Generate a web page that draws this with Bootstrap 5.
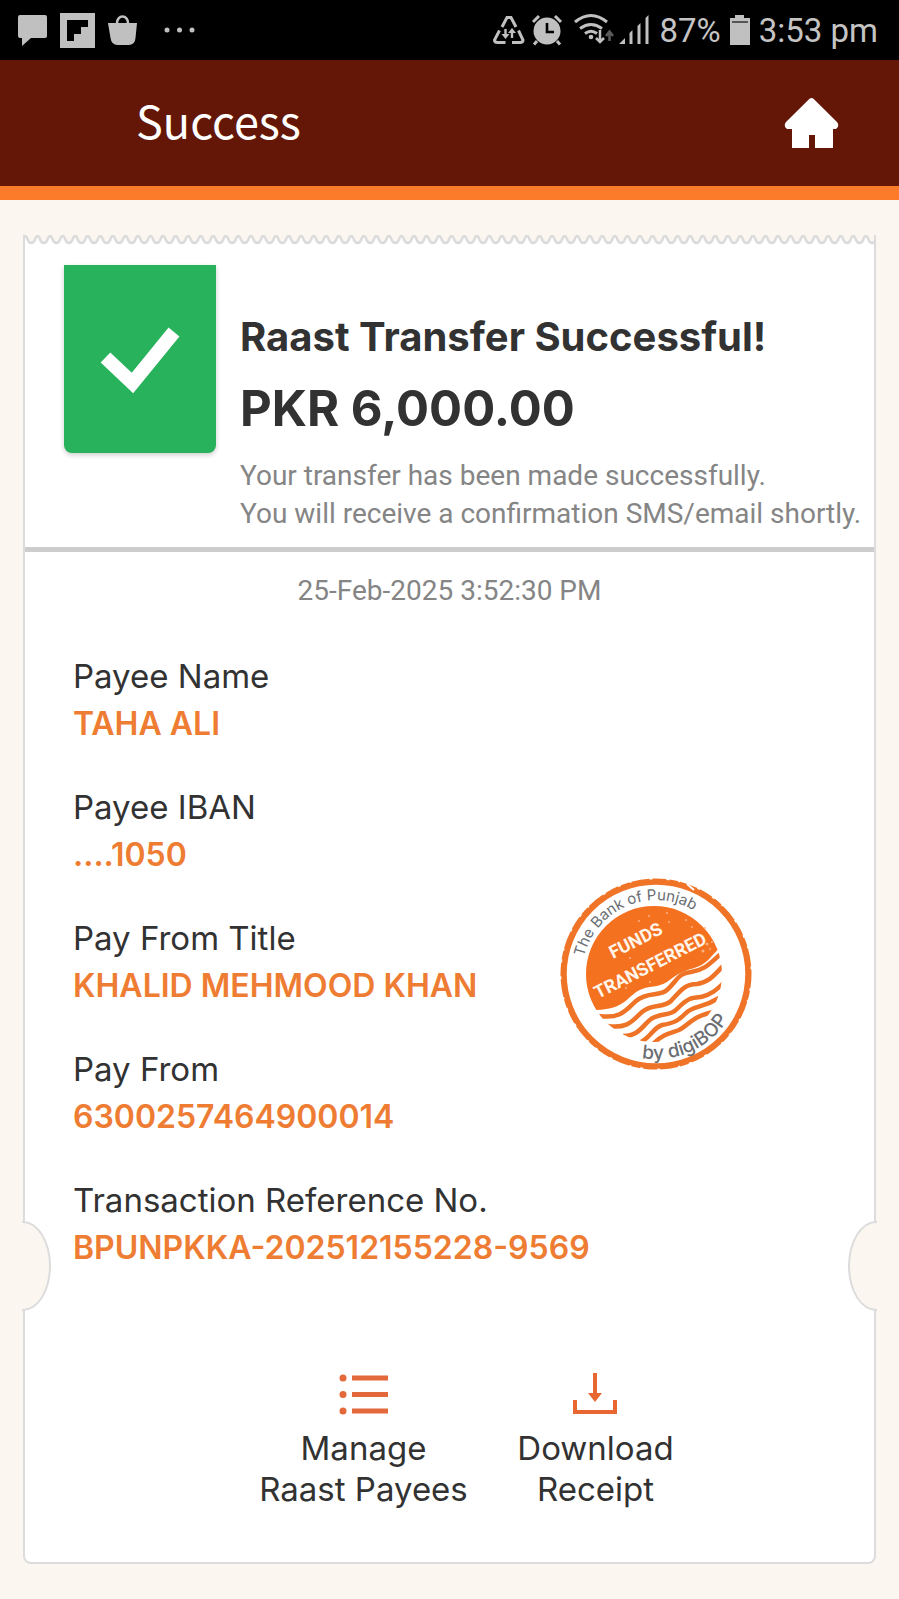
<!DOCTYPE html>
<html lang="en">
<head>
<meta charset="utf-8">
<meta name="viewport" content="width=device-width, initial-scale=1">
<title>Success</title>
<link rel="stylesheet" href="https://cdn.jsdelivr.net/npm/bootstrap@5.3.0/dist/css/bootstrap.min.css">
<style>
  :root { --cream: #fcf6f0; --line: #dcdcdc; --ink: #323232; --accent: #ee7d33; }
  body { background: var(--cream); color: var(--ink); font-family: Inter, sans-serif; }
  svg { display: block; flex: none; }
  .status-bar { height: 60px; background: #000; color: #c4c4c4; font: 33px/60px Roboto, sans-serif; padding: 2px 21px 0 17px; }
  .status-bar svg { margin-top: -2px; }
  .status-icons { gap: 6px; }
  .app-bar { height: 140px; background: #641706; border-bottom: 14px solid #fb7b2a; padding: 0 60px 0 136px; }
  .app-bar h1 { font: 45px/60px "Noto Sans CJK SC", sans-serif; color: #fff; padding-bottom: 6px; }
  .receipt { position: relative; margin: 35px 23px 34px; background: #fff; border: 2px solid var(--line); border-top: 0; border-radius: 0 0 8px 8px; }
  .receipt-edge { width: 100%; height: 10px; }
  .summary { padding: 20px 0 14px 39px; gap: 24px; border-bottom: 5px solid #cdcdcd; }
  .tick-box { width: 152px; height: 188px; background: #28b25c; border-radius: 0 0 8px 8px; box-shadow: 0 2px 5px #0003; }
  .summary-text { padding-top: 46px; }
  .summary-text h2 { font-size: 40px; line-height: 52px; font-weight: 700; }
  .amount { font-size: 49px; line-height: 60px; font-weight: 700; margin: 16px 0 18px; }
  .note, .stamp-time { font: 28px/38px Roboto, sans-serif; color: #858585; }
  .stamp-time { padding-top: 20px; }
  .details { padding: 43px 0 0 48px; }
  .details dl > div { height: 131px; }
  .details dt { font-size: 33px; line-height: 47px; font-weight: 400; }
  .details dd { font-size: 32px; line-height: 47px; font-weight: 600; color: var(--accent); }
  .stamp-art { margin: 0 122px 107px 0; }
  .notch { position: absolute; bottom: 251px; width: 29px; height: 90px; background: var(--cream); border: 2px solid var(--line); }
  .notch-start { left: -3px; border-left: 0; border-radius: 0 28px 28px 0 / 0 45px 45px 0; }
  .notch-end { right: -3px; border-right: 0; border-radius: 28px 0 0 28px / 45px 0 0 45px; }
  .actions { padding: 62px 0 52px 60px; }
  .action { width: 232px; border: 0; background: none; color: var(--ink); font-size: 33px; line-height: 41px; padding: 0; }
</style>
</head>
<body>
<div class="status-bar d-flex align-items-center justify-content-between">
  <svg width="182" height="60" viewBox="17 0 182 60" fill="#c0c0c0" aria-hidden="true">
    <path d="M20 15h25q2 0 2 2v19q0 2-2 2H31l-9 8v-8h-2q-2 0-2-2V17q0-2 2-2z"/>
    <path fill-rule="evenodd" d="M60 13h35v35H60zM67 20v21h7v-7h7v-7h7v-7z"/>
    <path d="M108 23h29l-1.500 15q-.5 7-7 7h-11q-6 0-7-7z"/>
    <path d="M117 24v-1a5.500 6.500 0 0 1 11 0v1" fill="none" stroke="#c0c0c0" stroke-width="2.500"/>
    <circle cx="167" cy="30" r="2.500"/><circle cx="179.500" cy="30" r="2.500"/><circle cx="192" cy="30" r="2.500"/>
  </svg>
  <div class="status-icons d-flex align-items-center">
    <svg width="160" height="60" viewBox="493 0 160 60" fill="none" stroke="#c0c0c0" aria-hidden="true">
      <path d="M502 27l5-9.500h4l5 9.500M499.500 30.500l-5 9.500q0 2.500 3 2.500h8M518.500 30.500l4.500 9.500q0 2.500-3 2.500h-8" stroke-width="3"/>
      <path d="M505.500 29v7M512 38v-7" stroke-width="2.400"/>
      <path d="M501.500 34h8l-4 5zM508 33h8l-4-5z" fill="#c0c0c0" stroke="none"/>
      <circle cx="547" cy="31" r="13.500" fill="#c0c0c0" stroke="none"/>
      <path d="M533 22l6-6M561 22l-6-6" stroke-width="3"/>
      <path d="M537 41l-3 3.500M557 41l3 3.500" stroke-width="3"/>
      <path d="M547 23v9h7" stroke="#000" stroke-width="2.600"/>
      <path d="M575 22q16-13 32 0M580 28.500q11-8 22 0M585 33.500q6-4.500 12 0" stroke-width="3"/>
      <circle cx="591" cy="37" r="2.300" fill="#c0c0c0" stroke="none"/>
      <path d="M600 30v12M596 38l4 4 4-4" stroke-width="2.500"/>
      <path d="M609.500 41V32M606 36l3.500-4.500 3.500 4.500" stroke="#5c5c5c" stroke-width="2.500"/>
      <path d="M619 44l6-6v6zM629.500 44V33l3-3v14zM637.500 44V26l3-3v21zM645.500 44V18l3-3v29z" fill="#c0c0c0" stroke="none"/>
    </svg>
    <span>87%</span>
    <svg width="26" height="60" viewBox="727 0 26 60" aria-hidden="true">
      <path d="M735 18v-3h9v3h6v27h-20V18z" fill="#c0c0c0"/><path d="M732 22h16" stroke="#555" stroke-width="2"/>
    </svg>
    <span>3:53 pm</span>
  </div>
</div>

<header class="app-bar d-flex align-items-center justify-content-between">
  <h1 class="m-0">Success</h1>
  <a href="#" aria-label="Home">
    <svg width="55" height="52" viewBox="784 97 55 52" fill="#fff" aria-hidden="true">
      <path d="M809.500 98.800q2-1.600 4 0L837 122q3 4-1 7h-3v19h-18v-13h-6v13h-17v-19h-5q-4-3-1-7z"/>
    </svg>
  </a>
</header>

<main class="receipt">
  <svg class="receipt-edge" aria-hidden="true">
    <defs>
      <pattern id="scallop" width="12.550" height="10" patternUnits="userSpaceOnUse">
        <path d="M0 0V1C3 1 1.500 8 6.300 8S9.500 1 12.550 1V0z" fill="#fcf6f0"/>
        <path d="M0 1C3 1 1.500 8 6.300 8S9.500 1 12.550 1" fill="none" stroke="#dadada" stroke-width="2.500"/>
      </pattern>
    </defs>
    <rect width="100%" height="10" fill="url(#scallop)"/>
  </svg>

  <section class="summary d-flex">
    <div class="tick-box flex-shrink-0">
      <svg width="152" height="188" viewBox="0 0 152 188" aria-hidden="true">
        <path d="M41.500 92.500L68.500 118 110 67" fill="none" stroke="#fff" stroke-width="14"/>
      </svg>
    </div>
    <div class="summary-text text-nowrap">
      <h2 class="m-0">Raast Transfer Successful!</h2>
      <p class="amount">PKR 6,000.00</p>
      <p class="note m-0">Your transfer has been made successfully.<br>You will receive a confirmation SMS/email shortly.</p>
    </div>
  </section>

  <p class="stamp-time text-center m-0">25-Feb-2025 3:52:30 PM</p>

  <section class="details">
    <div class="d-flex justify-content-between align-items-end">
      <dl class="m-0">
        <div><dt>Payee Name</dt><dd class="m-0">TAHA ALI</dd></div>
        <div><dt>Payee IBAN</dt><dd class="m-0">....1050</dd></div>
        <div><dt>Pay From Title</dt><dd class="m-0">KHALID MEHMOOD KHAN</dd></div>
        <div><dt>Pay From</dt><dd class="m-0">6300257464900014</dd></div>
      </dl>
      <svg class="stamp-art" width="192" height="192" viewBox="19 18 192 192" role="img" aria-label="Funds transferred">
        <defs>
          <path id="arc-top" d="M43 97A74 74 0 0 1 189 114"/>
          <path id="arc-bottom" d="M101 198A85 85 0 0 0 200 114"/>
          <clipPath id="disc"><circle cx="113" cy="114" r="68"/></clipPath>
        </defs>
        <circle cx="115" cy="114" r="92" fill="none" stroke="#f07427" stroke-width="5.500"/>
        <circle cx="115" cy="114" r="94.500" fill="none" stroke="#f07427" stroke-width="2" stroke-dasharray="14 3 9 2 18 3"/>
        <path d="M146 24l7 6" stroke="#fff" stroke-width="2"/>
        <g clip-path="url(#disc)">
          <path d="M40 40H185V84C173 89 170 102 156 107C144 111 139 112 130 119C120 128 112 125 101 129C86 135 86 149 55 150L40 152z" fill="#f4711f"/>
          <g fill="none" stroke="#ee7327" stroke-width="4.500">
            <path d="M58 156C80 159 85 150 95 141C107 131 118 137 126 130C136 121 137 113 150 112C164 110 168 104 182 92"/>
            <path d="M66 166C87 169 91 161 101 152C112 143 121 149 130 141C140 130 144 124 156 124C169 122 173 115 185 103"/>
            <path d="M82 176C98 176 101 166 110 159C121 152 129 157 137 148C147 138 150 138 160 137C172 134 176 129 186 120"/>
            <path d="M100 182C110 177 112 168 121 165C134 163 138 160 145 153C154 145 160 149 178 138"/>
            <path d="M112 184C122 174 130 173 138 170C148 165 150 157 172 152"/>
          </g>
        </g>
        <g fill="#fbb184">
          <circle cx="108" cy="56" r="1"/><circle cx="126" cy="53" r="1"/><circle cx="128" cy="62" r="1"/><circle cx="145" cy="60" r="1"/><circle cx="151" cy="67" r="1"/><circle cx="164" cy="68" r="1"/><circle cx="166" cy="84" r="1.500"/><circle cx="171" cy="82" r="1"/><circle cx="162" cy="91" r="1.500"/><circle cx="169" cy="89" r="1"/><circle cx="89" cy="98" r="1"/><circle cx="85" cy="128" r="1"/><circle cx="109" cy="122" r="1"/><circle cx="98" cy="61" r="1"/>
        </g>
        <g fill="#fff5ea" font-family="Roboto, sans-serif" font-weight="700">
          <text transform="translate(72 99) rotate(-27)" font-size="18">FUNDS</text>
          <text transform="translate(57 139) rotate(-27)" font-size="18">TRANSFERRED</text>
        </g>
        <g fill="#6a6d72" font-family="Inter, sans-serif">
          <text font-size="15"><textPath href="#arc-top">The Bank of Punjab</textPath></text>
          <text font-size="19" font-weight="500"><textPath href="#arc-bottom">by digiBOP</textPath></text>
        </g>
      </svg>
    </div>
    <dl class="m-0">
      <div><dt>Transaction Reference No.</dt><dd class="m-0">BPUNPKKA-202512155228-9569</dd></div>
    </dl>
  </section>

  <div class="actions d-flex justify-content-center">
    <button type="button" class="action d-flex flex-column align-items-center">
      <svg width="50" height="58" viewBox="0 0 50 58" fill="#e3683a" aria-hidden="true">
        <circle cx="4" cy="8" r="3.500"/><circle cx="4" cy="24.500" r="3.500"/><circle cx="4" cy="41" r="3.500"/>
        <path d="M13 5.500h36v5H13zM13 22h36v5H13zM13 38.500h36v5H13z"/>
      </svg>
      <span>Manage<br>Raast Payees</span>
    </button>
    <button type="button" class="action d-flex flex-column align-items-center">
      <svg width="46" height="58" viewBox="1 0 46 58" fill="#e8662f" aria-hidden="true">
        <path d="M21 3h4v20h5l-7 9-7-9h5zM1 30h4v10h36V30h4v14H1z"/>
      </svg>
      <span>Download<br>Receipt</span>
    </button>
  </div>
  <span class="notch notch-start"></span>
  <span class="notch notch-end"></span>
</main>
<script src="https://cdn.jsdelivr.net/npm/bootstrap@5.3.0/dist/js/bootstrap.bundle.min.js"></script>
</body>
</html>
